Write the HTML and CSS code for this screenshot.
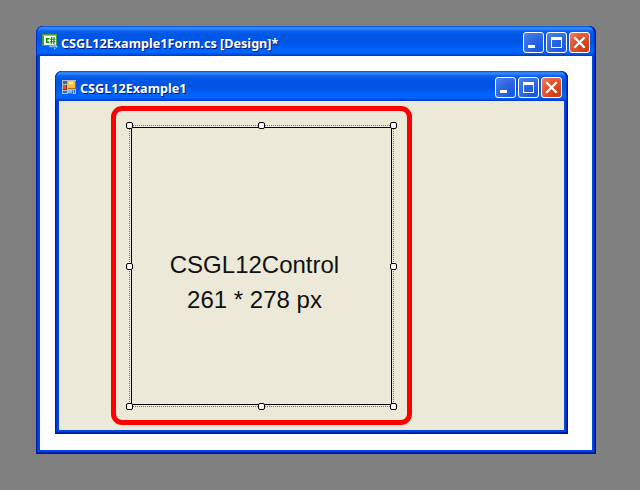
FILE: index.html
```
<!DOCTYPE html>
<html lang="en">
<head>
<meta charset="utf-8">
<title>CSGL12Example1Form.cs [Design]*</title>
<link rel="stylesheet" href="styles.css">
</head>
<body>
<main class="desktop">
  <section class="window designer">
    <header class="titlebar">
      <svg class="icon" width="17" height="16" viewBox="0 0 17 16">
        <path fill="#4c9b3f" d="M0 0h15v12H0z"/><path fill="#8cc277" d="M1 1h13v1H1z"/><path fill="#f4fbe9" d="M2 2h12v9H2z"/>
        <path fill="none" stroke="#0c8a12" stroke-width="1.500" d="M7.300 4.700H4.700v3.600h2.600"/>
        <path fill="none" stroke="#0c8a12" stroke-width="1.100" d="M9.800 3l-.6 7M12.200 3l-.6 7M8 5.300h5.500M8 7.700h5.500"/>
        <path fill="#82b9ef" d="M7 11.500h5V9l4 3.500-4 3.500v-2H7z"/><path fill="#3a78c8" d="M7 13h7v1H7z"/>
      </svg>
      <h1 class="title title-file">CSGL12Example1Form.cs [Design]*</h1>
      <div class="controls">
        <span class="btn"><svg viewBox="0 0 21 21"><path fill="#fff" d="M5 13h7v3H5z"/></svg></span>
        <span class="btn"><svg viewBox="0 0 21 21"><path fill="#fff" fill-rule="evenodd" d="M5 5h11v11H5zM6 8v7h9V8z"/></svg></span>
        <span class="btn close"><svg viewBox="0 0 21 21"><path stroke="#fff" stroke-width="2.300" d="M5.300 5.300l10.400 10.400M15.700 5.300L5.300 15.700"/></svg></span>
      </div>
    </header>
    <div class="client">
      <section class="window form">
        <header class="titlebar">
          <svg class="icon" width="15" height="15" viewBox="0 0 15 15" shape-rendering="crispEdges">
            <path fill="#b9bdb8" d="M0 0h14v14H0z"/>
            <path fill="#2d68cf" d="M1 1h4v3H1zM1 11h4v2H1zM12 10h1v3h-1z"/>
            <path fill="#8f2a1e" d="M1 5h4v5H1z"/><path fill="#d9533c" d="M1 5h3v4H1z"/>
            <path fill="#a4710c" d="M6 1h8v8H6z"/><path fill="#f6c23f" d="M6 1h7v7H6z"/><path fill="#ffe88e" d="M7 2h4v2H7z"/>
            <path fill="#3c73cb" d="M6 10h5v4H6z"/><path fill="#8ab5f2" d="M6 10h4v3H6z"/>
          </svg>
          <h2 class="title title-form">CSGL12Example1</h2>
          <div class="controls">
            <span class="btn"><svg viewBox="0 0 21 21"><path fill="#fff" d="M5 13h7v3H5z"/></svg></span>
            <span class="btn"><svg viewBox="0 0 21 21"><path fill="#fff" fill-rule="evenodd" d="M5 5h11v11H5zM6 8v7h9V8z"/></svg></span>
            <span class="btn close"><svg viewBox="0 0 21 21"><path stroke="#fff" stroke-width="2.300" d="M5.300 5.300l10.400 10.400M15.700 5.300L5.300 15.700"/></svg></span>
          </div>
        </header>
        <div class="surface">
          <div class="highlight">
            <div class="selection">
              <div class="control">
                <span class="name">CSGL12Control</span>
                <span class="size">261 * 278 px</span>
              </div>
              <i class="handle top left"></i><i class="handle top center"></i><i class="handle top right"></i>
              <i class="handle middle left"></i><i class="handle middle right"></i>
              <i class="handle bottom left"></i><i class="handle bottom center"></i><i class="handle bottom right"></i>
            </div>
          </div>
        </div>
      </section>
    </div>
  </section>
</main>
</body>
</html>
```
FILE: styles.css
```
* { box-sizing: border-box; }
body { margin: 0; background: #808080; }
.desktop { width: 640px; height: 490px; padding: 26px 0 0 36px; overflow: hidden; }
.window {
  display: flex;
  flex-direction: column;
  overflow: hidden;
  border-radius: 7px 7px 0 0;
  background: #0046de;
  box-shadow: inset 1px 0 #001eb0, inset -1px -1px #00138c, inset -2px -2px #0025b5, inset 2px 0 #0036d0;
  padding: 0 4px 4px;
}
.designer { width: 560px; height: 428px; }
.form { width: 513px; height: 363px; }
.titlebar {
  flex: none;
  height: 30px;
  margin: 0 -4px;
  padding: 6px 6px 0;
  display: flex;
  align-items: flex-start;
  border-radius: 7px 7px 0 0;
  background: linear-gradient(#0054cf 0, #1a6bee 1px, #3a92ff 2px, #2a7dfa 3px, #0d63ee 5px, #0057e5 8px, #0054e3 15px, #005cf2 20px, #0066ff 25px, #0061fb 27px, #0044d0 29px, #0038bd 30px);
  box-shadow: inset 1px 0 #0030c4, inset -1px 0 #00189a, inset -2px 0 #0035cb;
}
.icon { flex: none; }
.designer > .titlebar > .icon { margin-top: 2px; }
.form .icon { margin: 3px 0 0 1px; }
.title {
  margin: 2px 0 0 2px;
  font: bold 13px/18px "Noto Sans", sans-serif;
  color: #fff;
  text-shadow: 1px 1px #001b75;
  white-space: nowrap;
  transform-origin: 0 50%;
}
.form .title { margin-left: 3px; }
.title-file { transform: scaleX(.972); }
.title-form { transform: scaleX(.972); }
.controls { display: flex; gap: 2px; margin-left: auto; }
.btn {
  width: 21px;
  height: 21px;
  border: 1px solid #fff;
  border-radius: 3px;
  background: radial-gradient(circle at 80% 85%, #1258e8 0, #2b63df 45%, #4e83ee 100%);
}
.btn svg { display: block; width: 21px; height: 21px; margin: -1px; }
.close { background: radial-gradient(circle at 80% 85%, #cc3b0d 0, #df4d28 50%, #ec8065 100%); }
.client { flex: 1; background: #fff; padding: 15px 0 0 15px; }
.surface { flex: 1; background: #ece9d8; padding: 5px 0 0 52px; }
.highlight {
  width: 301px;
  height: 319px;
  border: 5px solid #f00;
  border-radius: 11px;
  padding: 14px 0 0 13px;
}
.selection {
  position: relative;
  width: 265px;
  height: 282px;
  padding: 2px;
  background:
    repeating-linear-gradient(90deg, #777568 0 1px, transparent 1px 2px) 0 0 / 100% 1px no-repeat,
    repeating-linear-gradient(90deg, #777568 0 1px, transparent 1px 2px) 0 100% / 100% 1px no-repeat,
    repeating-linear-gradient(#777568 0 1px, transparent 1px 2px) 0 0 / 1px 100% no-repeat,
    repeating-linear-gradient(#777568 0 1px, transparent 1px 2px) 100% 0 / 1px 100% no-repeat;
}
.control {
  width: 261px;
  height: 278px;
  border: 1px solid #000;
  padding: 119px 14px 0 0;
  display: flex;
  flex-direction: column;
  align-items: center;
  font: 24px/35px "Liberation Sans", Arial, sans-serif;
  color: #111;
  white-space: nowrap;
}
.handle {
  position: absolute;
  width: 7px;
  height: 7px;
  border: 1px solid #000;
  border-radius: 2px;
  background: #fff;
}
.top { top: -3px; }
.middle { top: 138px; }
.bottom { bottom: -3px; }
.left { left: -3px; }
.center { left: 129px; }
.right { right: -3px; }
```
